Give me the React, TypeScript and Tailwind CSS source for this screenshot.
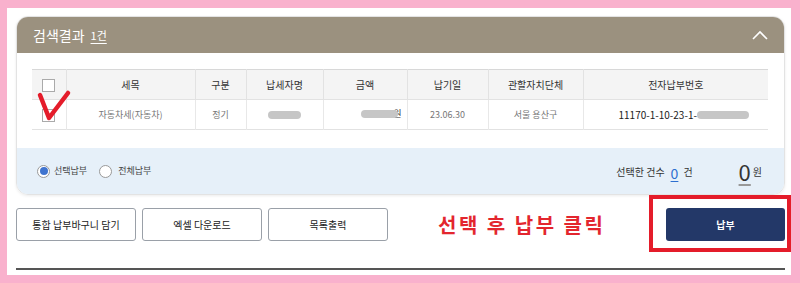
import React from "react";

const font = { fontFamily: '"Noto Sans CJK KR", "Noto Sans", sans-serif' };

function Blob({ w }: { w: number }) {
  return <span className="relative z-10 inline-block h-[8px] rounded-full bg-[#c6c6c6] align-middle" style={{ width: w }} />;
}

export default function App() {
  return (
    <div className="relative w-[800px] h-[283px] bg-[#f9b1cd] pt-[8px] pl-[7px] pr-[9px] pb-[8px]" style={font}>
      <div className="w-full h-full bg-white pt-[8px] pl-[9px] pr-[6px] flex flex-col">
        {/* Card */}
        <div className="rounded-[12px] border border-[#e3e3e3] shadow-[0_1px_3px_rgba(0,0,0,0.08)] overflow-hidden">
          <div className="h-[36px] bg-[#9b917f] flex items-center justify-between pl-[16px] pr-[16px]">
            <div className="flex items-center gap-[6px] text-white">
              <span className="text-[14px] leading-none">검색결과</span>
              <span className="text-[11px] leading-none underline underline-offset-[3px]">1건</span>
            </div>
            <svg width="16" height="10" viewBox="0 0 16 10">
              <polyline points="1,9 8,2 15,9" fill="none" stroke="white" strokeWidth="1.6" />
            </svg>
          </div>
          <div className="bg-white pt-[16px] pb-[18px] pl-[15px] pr-[16px]">
            <table className="w-[736px] table-fixed border-collapse text-[#333]">
              <colgroup>
                <col className="w-[34px]" />
                <col className="w-[129px]" />
                <col className="w-[51px]" />
                <col className="w-[77px]" />
                <col className="w-[84px]" />
                <col className="w-[81px]" />
                <col className="w-[95px]" />
                <col className="w-[185px]" />
              </colgroup>
              <thead>
                <tr className="h-[30px] bg-[#f4f4f4] border-t border-[#d8d8d8] text-[10px]">
                  <th className="font-normal">
                    <span className="inline-block w-[13px] h-[13px] border border-[#aaa] bg-white align-middle" />
                  </th>
                  <th className="font-normal border-l border-[#e2e2e2]">세목</th>
                  <th className="font-normal border-l border-[#e2e2e2]">구분</th>
                  <th className="font-normal border-l border-[#e2e2e2]">납세자명</th>
                  <th className="font-normal border-l border-[#e2e2e2]">금액</th>
                  <th className="font-normal border-l border-[#e2e2e2]">납기일</th>
                  <th className="font-normal border-l border-[#e2e2e2]">관할자치단체</th>
                  <th className="font-normal border-l border-[#e2e2e2]">전자납부번호</th>
                </tr>
              </thead>
              <tbody>
                <tr className="h-[30px] border-t border-b border-[#e2e2e2] text-[9px] text-[#777] text-center">
                  <td>
                    <span className="inline-block w-[13px] h-[13px] border border-[#aaa] bg-white align-middle" />
                  </td>
                  <td className="border-l border-[#e8e8e8]">자동차세(자동차)</td>
                  <td className="border-l border-[#e8e8e8]">정기</td>
                  <td className="border-l border-[#e8e8e8]">
                    <Blob w={33} />
                  </td>
                  <td className="border-l border-[#e8e8e8] text-right pr-[5px]">
                    <span className="inline-flex items-center">
                      <Blob w={37} />
                      <span className="text-[#333] -ml-[5px]">원</span>
                    </span>
                  </td>
                  <td className="border-l border-[#e8e8e8]">23.06.30</td>
                  <td className="border-l border-[#e8e8e8]">서울 용산구</td>
                  <td className="border-l border-[#e8e8e8] text-left pl-[35px] text-[10px] text-[#222]">
                    <span className="inline-flex items-center">
                      11170-1-10-23-1-
                      <Blob w={52} />
                    </span>
                  </td>
                </tr>
              </tbody>
            </table>
          </div>
          <div className="h-[46px] bg-[#e6f0f9] flex items-center justify-between pl-[20px] pr-[22px]">
            <div className="flex items-center text-[9px] text-[#444]">
              <span className="w-[13px] h-[13px] rounded-full border border-[#999] bg-white flex items-center justify-center">
                <span className="w-[8px] h-[8px] rounded-full bg-[#3f74cf]" />
              </span>
              <span className="ml-[4px]">선택납부</span>
              <span className="ml-[12px] w-[13px] h-[13px] rounded-full border border-[#999] bg-white" />
              <span className="ml-[6px]">전체납부</span>
            </div>
            <div className="flex items-end text-[#333]">
              <span className="text-[10px] mb-[3px]">선택한 건수</span>
              <span className="ml-[6px] text-[14px] leading-none text-[#2d6fd0] underline underline-offset-[2px] mb-[2px]">0</span>
              <span className="ml-[5px] text-[10px] mb-[3px]">건</span>
              <span className="ml-[46px] text-[22px] leading-none underline underline-offset-[3px] decoration-[#999]">0</span>
              <span className="ml-[2px] text-[10px] mb-[3px]">원</span>
            </div>
          </div>
        </div>

        {/* Buttons row */}
        <div className="mt-[13px] h-[33px] flex items-center">
          <button className="w-[120px] h-[33px] border border-[#9aa0a8] rounded-[3px] bg-white text-[10px] text-[#222]">통합 납부바구니 담기</button>
          <button className="ml-[6px] w-[120px] h-[33px] border border-[#9aa0a8] rounded-[3px] bg-white text-[10px] text-[#222]">엑셀 다운로드</button>
          <button className="ml-[6px] w-[120px] h-[33px] border border-[#9aa0a8] rounded-[3px] bg-white text-[10px] text-[#222]">목록출력</button>
          <span className="ml-[50px] text-[20px] font-bold tracking-[2.5px] text-[#e3262e]">선택 후 납부 클릭</span>
          <div className="flex-1" />
          <button className="w-[119px] h-[33px] rounded-[3px] bg-[#233868] text-white text-[10px] font-bold">납부</button>
        </div>

        <div className="mt-[27px] h-[2px] bg-[#555]" />
      </div>

      {/* Red highlight rectangle */}
      <div className="absolute left-[649px] top-[195px] w-[142px] h-[57px] border-[4px] border-[#e41c2a]" />

      {/* Red check mark */}
      <svg className="absolute left-0 top-0" width="100" height="140" viewBox="0 0 100 140">
        <polyline points="40,95 49,118 68,93" fill="none" stroke="#e41c2a" strokeWidth="4.5" strokeLinecap="round" strokeLinejoin="round" />
      </svg>
    </div>
  );
}
